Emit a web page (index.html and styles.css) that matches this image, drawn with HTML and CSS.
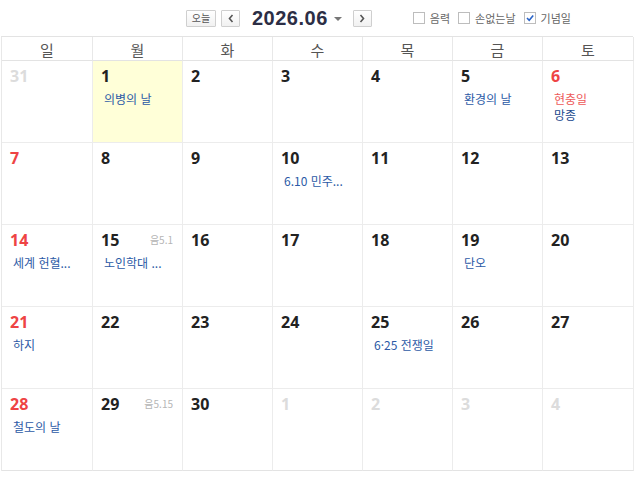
FILE: index.html
```html
<!DOCTYPE html>
<html lang="ko">
<head>
<meta charset="utf-8">
<link rel="stylesheet" href="styles.css">
</head>
<body>
<div class="toolbar">
  <button class="btn today">오늘</button>
  <button class="btn arrow"><svg width="8" height="9" viewBox="0 0 8 9"><path d="M5.5 1 L2.5 4.5 L5.5 8" fill="none" stroke="#555" stroke-width="1.6"/></svg></button>
  <div class="title">2026.06<span class="caret"></span></div>
  <button class="btn arrow"><svg width="8" height="9" viewBox="0 0 8 9"><path d="M2.5 1 L5.5 4.5 L2.5 8" fill="none" stroke="#555" stroke-width="1.6"/></svg></button>
  <div class="opts">
    <label class="opt"><span class="box"></span>음력</label>
    <label class="opt"><span class="box"></span>손없는날</label>
    <label class="opt"><span class="box checked"><svg width="10" height="10" viewBox="0 0 10 10"><path d="M2 5 L4.2 7.3 L8.2 2.4" fill="none" stroke="#2a64c8" stroke-width="1.6"/></svg></span>기념일</label>
  </div>
</div>
<div class="cal">
  <div class="dow">일</div><div class="dow">월</div><div class="dow">화</div><div class="dow">수</div><div class="dow">목</div><div class="dow">금</div><div class="dow">토</div>

  <div class="cell"><div class="num other">31</div></div>
  <div class="cell today-cell"><div class="num">1</div><div class="ev">의병의 날</div></div>
  <div class="cell"><div class="num">2</div></div>
  <div class="cell"><div class="num">3</div></div>
  <div class="cell"><div class="num">4</div></div>
  <div class="cell"><div class="num">5</div><div class="ev">환경의 날</div></div>
  <div class="cell"><div class="num red">6</div><div class="ev red">현충일</div><div class="ev dark">망종</div></div>

  <div class="cell"><div class="num red">7</div></div>
  <div class="cell"><div class="num">8</div></div>
  <div class="cell"><div class="num">9</div></div>
  <div class="cell"><div class="num">10</div><div class="ev">6.10 민주...</div></div>
  <div class="cell"><div class="num">11</div></div>
  <div class="cell"><div class="num">12</div></div>
  <div class="cell"><div class="num">13</div></div>

  <div class="cell"><div class="num red">14</div><div class="ev">세계 헌혈...</div></div>
  <div class="cell"><div class="head"><div class="num">15</div><span class="lunar">음5.1</span></div><div class="ev">노인학대 ...</div></div>
  <div class="cell"><div class="num">16</div></div>
  <div class="cell"><div class="num">17</div></div>
  <div class="cell"><div class="num">18</div></div>
  <div class="cell"><div class="num">19</div><div class="ev">단오</div></div>
  <div class="cell"><div class="num">20</div></div>

  <div class="cell"><div class="num red">21</div><div class="ev">하지</div></div>
  <div class="cell"><div class="num">22</div></div>
  <div class="cell"><div class="num">23</div></div>
  <div class="cell"><div class="num">24</div></div>
  <div class="cell"><div class="num">25</div><div class="ev">6·25 전쟁일</div></div>
  <div class="cell"><div class="num">26</div></div>
  <div class="cell"><div class="num">27</div></div>

  <div class="cell"><div class="num red">28</div><div class="ev">철도의 날</div></div>
  <div class="cell"><div class="head"><div class="num">29</div><span class="lunar">음5.15</span></div></div>
  <div class="cell"><div class="num">30</div></div>
  <div class="cell"><div class="num other">1</div></div>
  <div class="cell"><div class="num other">2</div></div>
  <div class="cell"><div class="num other">3</div></div>
  <div class="cell"><div class="num other">4</div></div>
</div>
</body>
</html>
```
FILE: styles.css
```css
* { box-sizing: border-box; }
html, body { margin: 0; padding: 0; background: #fff; }
body {
  font-family: "Noto Sans", "Noto Sans CJK KR", sans-serif;
  width: 640px;
  height: 484px;
  overflow: hidden;
}
.toolbar {
  height: 36px;
  display: flex;
  align-items: center;
  padding-left: 186px;
}
.btn {
  margin: 0;
  padding: 0;
  height: 17px;
  border: 1px solid #cfcfcf;
  background: linear-gradient(#ffffff, #f1f1f1);
  border-radius: 1px;
  display: flex;
  align-items: center;
  justify-content: center;
  font-family: "Noto Sans CJK KR", sans-serif;
  font-size: 10px;
  color: #555;
  line-height: 1;
}
.btn.today { width: 30px; }
.btn.arrow { width: 19px; margin-left: 5px; }
.title {
  margin-left: 12px;
  font-family: "Liberation Sans", Arial, sans-serif;
  font-weight: bold;
  font-size: 20px;
  color: #2c2e45;
  letter-spacing: 0.5px;
  display: flex;
  align-items: center;
}
.caret {
  display: inline-block;
  width: 0; height: 0;
  margin-left: 6px;
  border-left: 4px solid transparent;
  border-right: 4px solid transparent;
  border-top: 4px solid #777;
  margin-top: 1px;
}
.title + .btn.arrow { margin-left: 11px; }
.opts {
  display: flex;
  align-items: center;
  margin-left: 41px;
  gap: 8px;
}
.opt {
  display: flex;
  align-items: center;
  font-family: "Noto Sans CJK KR", sans-serif;
  font-size: 11px;
  color: #666;
}
.box {
  width: 12px;
  height: 12px;
  border: 1px solid #bdbdbd;
  background: #fff;
  margin-right: 5px;
  display: flex;
  align-items: center;
  justify-content: center;
}
.cal {
  margin-left: 1px;
  width: 632px;
  display: grid;
  grid-template-columns: 91px 90px 90px 90px 90px 90px 91px;
  grid-template-rows: 24px repeat(5, 82px);
  border-top: 1px solid #e3e3e3;
  border-left: 1px solid #e8e8e8;
}
.dow {
  border-right: 1px solid #e8e8e8;
  border-bottom: 1px solid #e3e3e3;
  display: flex;
  align-items: center;
  justify-content: center;
  font-family: "Noto Sans CJK KR", sans-serif;
  font-size: 15px;
  color: #555;
  padding-top: 1px;
}
.cell {
  border-right: 1px solid #ececec;
  border-bottom: 1px solid #ececec;
  padding: 4px 9px 0 8px;
}
.cal .cell:nth-last-child(-n+7) { border-bottom-color: #e3e3e3; }
.today-cell { background: #ffffd8; }
.head {
  display: flex;
  justify-content: space-between;
  align-items: center;
}
.num {
  font-family: "Noto Sans", "Noto Sans CJK KR", sans-serif;
  font-weight: bold;
  font-size: 16px;
  line-height: 22px;
  color: #222;
}
.num.red { color: #ee4444; }
.num.other { color: #dcdcdc; }
.lunar {
  font-family: "Noto Sans CJK KR", sans-serif;
  font-size: 10px;
  color: #b5b5b5;
  margin-top: -1px;
}
.ev {
  font-family: "Noto Sans CJK KR", sans-serif;
  font-size: 12px;
  line-height: 16px;
  color: #2c5aa6;
  padding-left: 3px;
  white-space: nowrap;
}
.num + .ev, .head + .ev { margin-top: 4px; }
.ev.red { color: #ee5a5a; }
.ev.dark { color: #224a8e; }
```
